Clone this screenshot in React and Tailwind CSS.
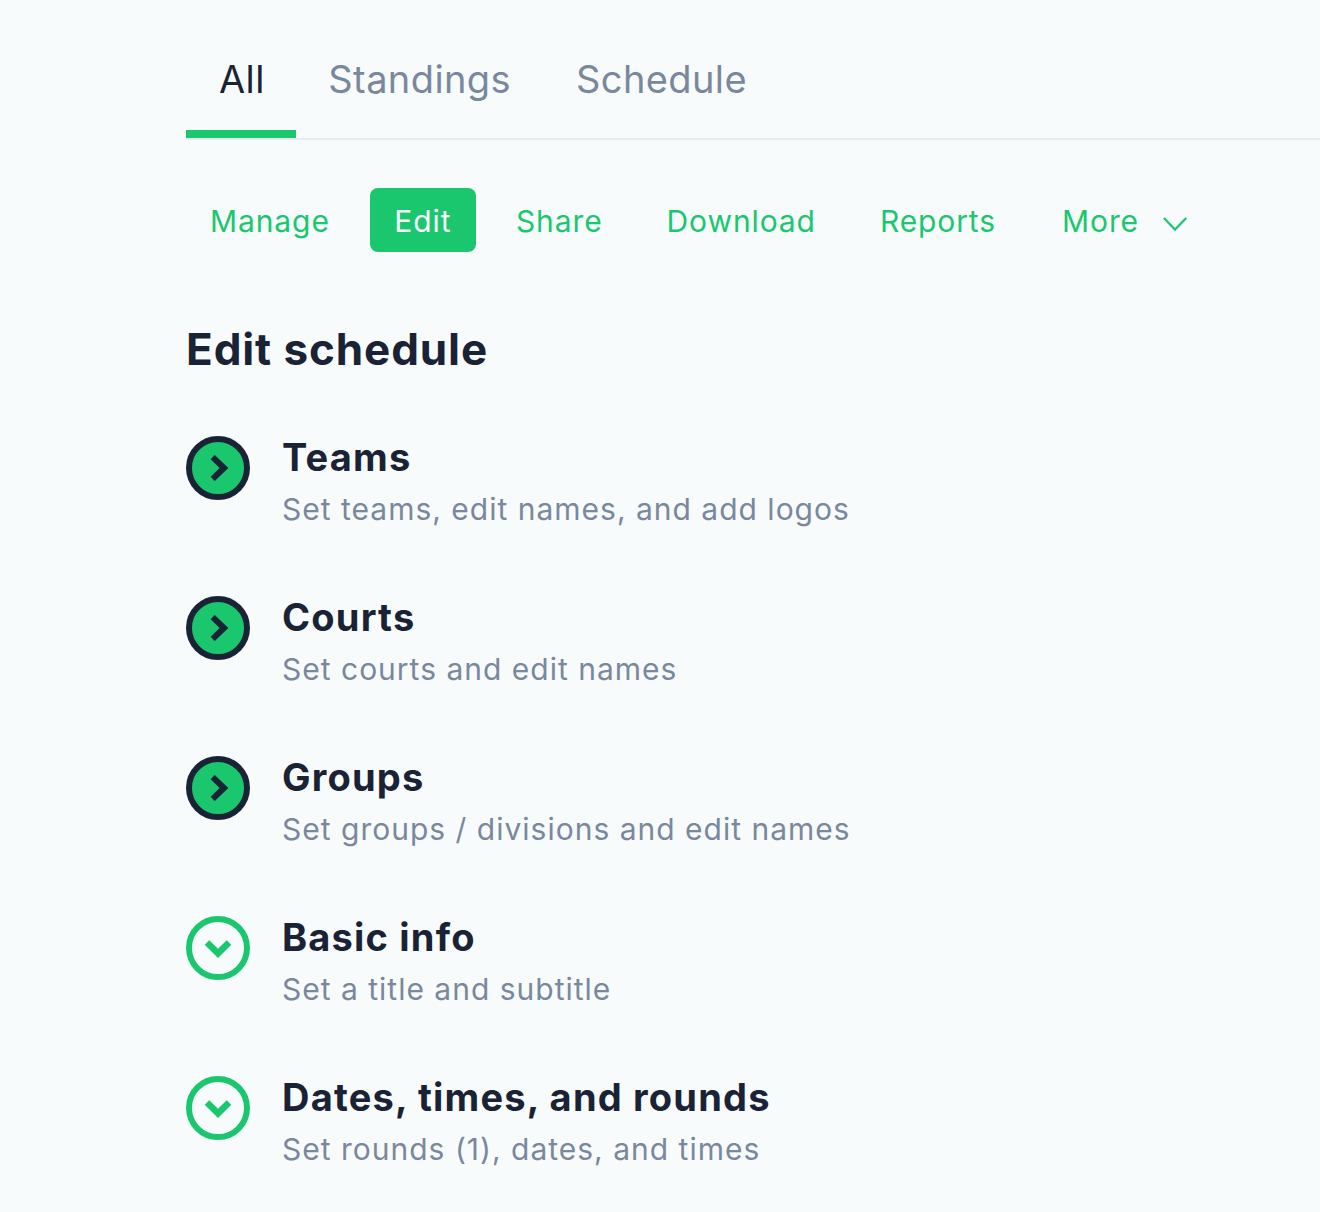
const font = { fontFamily: 'Inter, sans-serif' }

const tabs = ['All', 'Standings', 'Schedule']
const actions = ['Manage', 'Edit', 'Share', 'Download', 'Reports']

const sections = [
  { title: 'Teams', desc: 'Set teams, edit names, and add logos', done: true },
  { title: 'Courts', desc: 'Set courts and edit names', done: true },
  { title: 'Groups', desc: 'Set groups / divisions and edit names', done: true },
  { title: 'Basic info', desc: 'Set a title and subtitle', done: false },
  { title: 'Dates, times, and rounds', desc: 'Set rounds (1), dates, and times', done: false },
]

function StepIcon({ done }) {
  if (done) {
    return (
      <div className="mt-px h-16 w-16 shrink-0 rounded-full border-[6px] border-[#1a2335] bg-[#1ac76e]">
        <svg width="52" height="52" viewBox="0 0 52 52" fill="none">
          <path d="M20.7 15.2L32 26L20.7 36.8" stroke="#1a2335" strokeWidth="6" />
        </svg>
      </div>
    )
  }
  return (
    <div className="mt-px h-16 w-16 shrink-0 rounded-full border-[6px] border-[#1ac76e]">
      <svg width="52" height="52" viewBox="0 0 52 52" fill="none">
        <path d="M15 20.5L26 31.4L37 20.5" stroke="#1ac76e" strokeWidth="6.5" />
      </svg>
    </div>
  )
}

export default function App() {
  return (
    <div className="min-h-[1212px] overflow-hidden bg-[#f7fbfc] pl-[186px]" style={font}>
      <div className="flex h-[140px] border-b-2 border-[#e6ecf0]">
        {tabs.map((tab, i) => (
          <div
            key={tab}
            className={
              i === 0
                ? 'flex h-[138px] items-center border-b-8 border-[#1ac76e] pl-[33px] pr-[31px] pt-[28px] text-[38px] tracking-[0.4px] text-[#1a2335]'
                : 'flex h-[138px] items-center border-b-8 border-transparent px-[32.5px] pt-[28px] text-[38px] tracking-[0.4px] text-[#7a889e]'
            }
          >
            {tab}
          </div>
        ))}
      </div>

      <div className="mt-12 flex items-center gap-4">
        {actions.map((a) => (
          <div
            key={a}
            className={
              a === 'Edit'
                ? 'flex h-16 items-center rounded-lg bg-[#1ac76e] px-[24.5px] pt-[2px] text-[30px] tracking-[0.9px] text-[#f7fbfc]'
                : 'flex h-16 items-center px-6 pt-[2px] text-[30px] tracking-[0.9px] text-[#1ac76e]'
            }
          >
            {a}
          </div>
        ))}
        <div className="ml-[2px] flex h-16 items-center gap-6 px-6 pt-[2px] text-[30px] tracking-[0.9px] text-[#1ac76e]">
          More
          <svg className="mt-[6px]" width="24" height="14" viewBox="0 0 24 14" fill="none">
            <path d="M0.8 1L12 12.6L23.2 1" stroke="#1ac76e" strokeWidth="2.2" />
          </svg>
        </div>
      </div>

      <h1 className="mt-[67px] text-[44px] font-bold leading-[60px] tracking-[0.9px] text-[#1a2335]">Edit schedule</h1>

      <div className="mt-[56px] flex flex-col gap-12">
        {sections.map((s) => (
          <div key={s.title} className="flex h-[112px] gap-8">
            <StepIcon done={s.done} />
            <div>
              <div className="text-[38px] font-bold leading-[44px] tracking-[1.2px] text-[#1a2335]">{s.title}</div>
              <div className="mt-[8px] text-[30px] leading-[44px] tracking-[1px] text-[#7a889e]">{s.desc}</div>
            </div>
          </div>
        ))}
      </div>
    </div>
  )
}
